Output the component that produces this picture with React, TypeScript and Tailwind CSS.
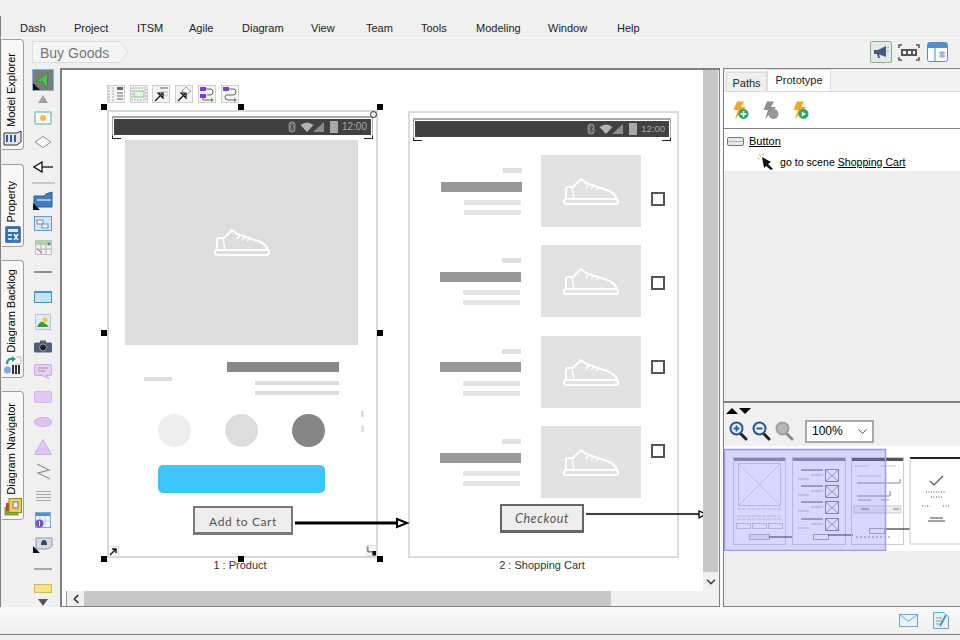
import type { ReactNode } from "react";
import { ChevronDown, ChevronLeft } from "lucide-react";

const menus = [
  { name: "Dash", w: "w-[54px]" },
  { name: "Project", w: "w-[63px]" },
  { name: "ITSM", w: "w-[52px]" },
  { name: "Agile", w: "w-[53px]" },
  { name: "Diagram", w: "w-[69px]" },
  { name: "View", w: "w-[55px]" },
  { name: "Team", w: "w-[55px]" },
  { name: "Tools", w: "w-[55px]" },
  { name: "Modeling", w: "w-[72px]" },
  { name: "Window", w: "w-[69px]" },
  { name: "Help", w: "w-[40px]" },
];

function Ico({ w, h, children }: { w: number; h: number; children: ReactNode }) {
  return (
    <svg width={w} height={h} viewBox={`0 0 ${w} ${h}`} fill="none" className="block shrink-0">
      {children}
    </svg>
  );
}

function Slot({ className, children }: { className: string; children?: ReactNode }) {
  return <div className={`flex shrink-0 items-center justify-center ${className}`}>{children}</div>;
}

function Sep() {
  return <div className="h-[2px] w-[18px] bg-[#a8a8a8]" />;
}

function Tab({ label, className, icon }: { label: string; className: string; icon: ReactNode }) {
  return (
    <div
      className={`flex w-[22px] flex-col items-center justify-end gap-[3px] rounded-r-[4px] border border-l-0 border-[#a0a0a0] bg-[#f8f8f8] pb-[3px] ${className}`}
    >
      <span className="mr-[3px] rotate-180 text-[11px] leading-none text-black [writing-mode:vertical-rl]">{label}</span>
      {icon}
    </div>
  );
}

function Palette() {
  return (
    <div className="flex w-[34px] shrink-0 flex-col items-center pt-[1px]">
      <Slot className="h-[22px] w-[22px] border border-[#7fb2e8] bg-[#7c7c7c]">
        <Ico w={20} h={20}>
          <path d="M15 3 L3 11 L10 12 L14 19 Z" fill="#4fc14f" stroke="#2f8f2f" />
          <path d="M0 13 L7 20 L0 20 Z" fill="#111" />
        </Ico>
      </Slot>
      <Slot className="h-[15px]">
        <div className="h-0 w-0 border-x-[5px] border-b-[8px] border-x-transparent border-b-[#a0a0a0]" />
      </Slot>
      <Slot className="h-[23px]">
        <div className="flex h-[14px] w-[18px] items-center justify-center rounded-[2px] border-2 border-[#9ed4d4] bg-[#fdfbf0]">
          <div className="size-[6px] rounded-full bg-[#f5b955]" />
        </div>
      </Slot>
      <Slot className="h-[26px]">
        <Ico w={18} h={12}>
          <path d="M9 0.5 L17 6 L9 11.5 L1 6 Z" fill="#fff" stroke="#8a8a8a" />
        </Ico>
      </Slot>
      <Slot className="h-[23px]">
        <Ico w={20} h={12}>
          <path d="M6 6 H20" stroke="#111" strokeWidth="1.3" />
          <path d="M9 1 L1 6 L9 11 Z" fill="#fff" stroke="#111" strokeWidth="1.3" />
        </Ico>
      </Slot>
      <Slot className="h-[10px]">
        <div className="h-[2px] w-[23px] bg-[#c8c8c8]" />
      </Slot>
      <Slot className="h-[24px]">
        <Ico w={20} h={19}>
          <path d="M1 5 L11 5 L13 3 L19 1 L19 16 L1 16 Z" fill="#3f7fc0" stroke="#2a5f9c" />
          <rect x="4" y="8" width="14" height="2" fill="#9cc4ea" />
          <path d="M0 12 L7 19 L0 19 Z" fill="#111" />
        </Ico>
      </Slot>
      <Slot className="h-[22px]">
        <Ico w={18} h={15}>
          <rect x="0.5" y="0.5" width="17" height="14" fill="#cfe4f8" stroke="#57a0e0" />
          <rect x="3" y="4" width="6" height="4" fill="#e8f0f8" stroke="#7d98b8" />
          <rect x="8" y="8" width="6" height="4" fill="#e8f0f8" stroke="#7d98b8" />
        </Ico>
      </Slot>
      <Slot className="h-[26px]">
        <Ico w={17} h={15}>
          <rect x="0.5" y="0.5" width="16" height="14" fill="#f2f2f2" stroke="#c2c2c2" />
          <rect x="1" y="1" width="15" height="4" fill="#a8d89a" />
          <path d="M0.5 9 H16.5 M6 5 V14.5 M11 5 V14.5" stroke="#b0b0b0" />
          <path d="M2 9 L7 13" stroke="#b05050" />
          <circle cx="14" cy="4" r="1.5" fill="#4f86c6" />
        </Ico>
      </Slot>
      <Slot className="h-[24px]">
        <div className="h-[2px] w-[18px] bg-[#8e8e8e]" />
      </Slot>
      <Slot className="h-[26px]">
        <div className="h-[12px] w-[18px] border border-[#3a9ac8] border-t-2 bg-[#c2e4f6]" />
      </Slot>
      <Slot className="h-[24px]">
        <Ico w={16} h={16}>
          <rect x="0.5" y="0.5" width="15" height="15" fill="#e0eaf4" stroke="#b4c8dc" />
          <circle cx="10" cy="6" r="2.5" fill="#f2c53d" />
          <path d="M2 13 Q6 5 9 9 Q12 10 14 13 Z" fill="#3f9a3a" />
        </Ico>
      </Slot>
      <Slot className="h-[24px]">
        <Ico w={18} h={13}>
          <rect x="0" y="2.5" width="18" height="10" rx="1.5" fill="#4f5f78" />
          <rect x="6" y="0.5" width="6" height="3" fill="#4f5f78" />
          <circle cx="9" cy="7.5" r="3.5" fill="#222" stroke="#9aa4b4" />
        </Ico>
      </Slot>
      <Slot className="h-[26px]">
        <Ico w={18} h={15}>
          <path d="M2 0.5 H16 Q17.5 0.5 17.5 2 V10 Q17.5 11.5 16 11.5 H12 L15 14.5 L8 11.5 H2 Q0.5 11.5 0.5 10 V2 Q0.5 0.5 2 0.5 Z" fill="#e8d0f4" stroke="#cfa4e8" />
          <path d="M4 4 H14 M4 7 H11" stroke="#a090b0" />
        </Ico>
      </Slot>
      <Slot className="h-[25px]">
        <div className="h-[12px] w-[18px] rounded-[2px] border border-[#d8b8ec] bg-[#e4c8f4]" />
      </Slot>
      <Slot className="h-[25px]">
        <div className="h-[10px] w-[18px] rounded-[50%] border border-[#d0aee8] bg-[#e0c2f2]" />
      </Slot>
      <Slot className="h-[25px]">
        <Ico w={18} h={16}>
          <path d="M9 0.5 L17.5 15.5 H0.5 Z" fill="#e2c4f2" stroke="#d0aee8" />
        </Ico>
      </Slot>
      <Slot className="h-[24px]">
        <Ico w={15} h={17}>
          <path d="M1 1 L13 7 L2 10 L14 16" stroke="#8f8f8f" strokeWidth="1.2" />
        </Ico>
      </Slot>
      <Slot className="h-[25px]">
        <div className="flex w-[15px] flex-col gap-[2px]">
          <div className="h-[1px] bg-[#a8a8a8]" />
          <div className="h-[1px] bg-[#a8a8a8]" />
          <div className="h-[1px] bg-[#a8a8a8]" />
          <div className="h-[1px] bg-[#a8a8a8]" />
        </div>
      </Slot>
      <Slot className="h-[24px]">
        <Ico w={16} h={16}>
          <rect x="0.5" y="0.5" width="15" height="15" fill="#eaf2fa" stroke="#7ea8d4" />
          <rect x="1" y="1" width="14" height="3" fill="#4f8fd0" />
          <path d="M5 4 V15 M10 4 V15 M1 9 H15" stroke="#c8d4e0" />
          <circle cx="4.5" cy="11.5" r="4" fill="#7a4fc0" />
          <rect x="4" y="9" width="1" height="5" fill="#fff" />
        </Ico>
      </Slot>
      <Slot className="h-[26px]">
        <Ico w={20} h={16}>
          <path d="M3 1 H19 V9 L15 12 H3 Z" fill="#d4dce8" stroke="#8a9ab0" />
          <path d="M8 8 Q8 3 11 3 Q14 3 14 8 Z" fill="#3a4658" />
          <path d="M0 9 L7 16 L0 16 Z" fill="#111" />
        </Ico>
      </Slot>
      <Slot className="h-[22px]">
        <Sep />
      </Slot>
      <Slot className="h-[17px]">
        <div className="h-[9px] w-[18px] border border-[#d8b850] bg-[#f6e48a]" />
      </Slot>
      <Slot className="h-[10px]">
        <div className="h-0 w-0 border-x-[5px] border-t-[7px] border-x-transparent border-t-[#555555]" />
      </Slot>
    </div>
  );
}

function Shoe({ className }: { className: string }) {
  return (
    <svg width="56" height="29" viewBox="0 0 56 29" fill="none" className={`absolute ${className}`} stroke="#fff" strokeWidth="2" strokeLinejoin="round">
      <rect x="1" y="22" width="54" height="5" rx="2" />
      <path d="M3 22 V12 Q3 10 5 10 H10 L18 2 L23 6 L44 13 Q52 16 54 22" />
      <path d="M9 10 L11 22 M26 7 L23 11 M31 9 L28 12 M36 10 L33 13" strokeWidth="1.4" />
    </svg>
  );
}

function PhoneBar({ className, compact }: { className: string; compact?: boolean }) {
  return (
    <div className={`absolute border-x border-t-2 border-[#a8a8a8] p-[1px] ${className}`}>
      <div className="flex h-full items-center justify-end gap-[4px] bg-[#414141] pr-[4px]">
        <Ico w={8} h={12}>
          <rect x="0.5" y="0.5" width="7" height="11" rx="3.5" fill="#8a8a8a" />
          <path d="M2 3.5 L6 8 L4 10 V2 L6 4 L2 8.5" stroke="#3d3d3d" strokeWidth="0.8" />
        </Ico>
        <Ico w={26} h={12}>
          <path d="M0.5 4 Q7 -1 13.5 4 L7 11 Z" fill="#b4b4b4" />
          <path d="M13 11 L24 1 V11 Z" fill="#8c8c8c" />
        </Ico>
        <div className="flex h-[12px] w-[8px] bg-[#a8a8a8]" />
        <span className={`font-['Liberation_Sans',sans-serif] leading-none text-[#a8a8a8] ${compact ? "text-[9.5px]" : "text-[10px]"}`}>12:00</span>
      </div>
      <div className="absolute -bottom-[3px] -left-[1px] h-[3px] w-[9px] border-b border-l border-[#222]" />
      <div className="absolute -right-[1px] -bottom-[3px] h-[3px] w-[9px] border-r border-b border-[#222]" />
    </div>
  );
}

function Handle({ className }: { className: string }) {
  return <div className={`absolute size-[6px] bg-black ${className}`} />;
}

function ToolIcon({ className, children }: { className: string; children: ReactNode }) {
  return (
    <div className={`absolute size-[18px] border border-[#cfcfcf] bg-[#f4f4f4] ${className}`}>
      <svg width="16" height="16" viewBox="0 0 16 16" fill="none">
        {children}
      </svg>
    </div>
  );
}

const cartRows = [
  { pic: "top-[155px]", shoe: "top-[177px]", small: "top-[168px] left-[503px]", dark: "top-[182px] left-[441px]", a: "top-[200px] left-[464px]", b: "top-[210px] left-[464px]", box: "top-[192px]" },
  { pic: "top-[245px]", shoe: "top-[267px]", small: "top-[258px] left-[502px]", dark: "top-[272px] left-[440px]", a: "top-[290px] left-[463px]", b: "top-[300px] left-[463px]", box: "top-[276px]" },
  { pic: "top-[336px]", shoe: "top-[358px]", small: "top-[349px] left-[502px]", dark: "top-[362px] left-[440px]", a: "top-[381px] left-[463px]", b: "top-[391px] left-[463px]", box: "top-[360px]" },
  { pic: "top-[426px]", shoe: "top-[448px]", small: "top-[439px] left-[502px]", dark: "top-[453px] left-[440px]", a: "top-[471px] left-[463px]", b: "top-[481px] left-[463px]", box: "top-[444px]" },
];

function Diagram() {
  return (
    <div className="absolute -top-[70px] -left-[62px] h-[640px] w-[960px] font-['Liberation_Sans',sans-serif]">
      {/* quick actions above the selected shape */}
      <ToolIcon className="top-[85px] left-[107px]">
        <path d="M1 1 V15 M5 1 V15" stroke="#aaa" strokeDasharray="2 1" />
        <rect x="9" y="1" width="6" height="3" fill="#666" />
        <path d="M9 7 H15 M9 10 H15 M9 13 H15" stroke="#666" />
      </ToolIcon>
      <ToolIcon className="top-[85px] left-[130px]">
        <rect x="1" y="2" width="14" height="12" stroke="#aaa" strokeDasharray="2 1" />
        <rect x="3" y="5" width="10" height="6" fill="#e4f4e0" stroke="#8cc87c" />
      </ToolIcon>
      <ToolIcon className="top-[85px] left-[152px]">
        <rect x="7" y="1" width="8" height="2" fill="#aaa" />
        <path d="M8 6 H15 M8 9 H15" stroke="#bbb" />
        <path d="M2 15 L9 8 M5 7 L10 7 L10 12 Z" stroke="#111" strokeWidth="1.2" fill="#fff" />
      </ToolIcon>
      <ToolIcon className="top-[85px] left-[175px]">
        <path d="M10 1 L15 5 L10 9 L6 5 Z" fill="#fff" stroke="#999" />
        <path d="M2 15 L9 8 M5 7 L10 7 L10 12 Z" stroke="#111" strokeWidth="1.2" fill="#fff" />
      </ToolIcon>
      <ToolIcon className="top-[85px] left-[198px]">
        <rect x="1" y="1" width="6" height="4" fill="#7e3fc8" />
        <rect x="1" y="8" width="6" height="4" fill="#7e3fc8" />
        <path d="M7 3 H12 Q14 3 14 6 Q14 9 11 9 H8 M4 12 V14 H12" stroke="#666" />
        <path d="M12 12 L15 14 L12 16 Z" fill="#3ba83b" />
      </ToolIcon>
      <ToolIcon className="top-[85px] left-[221px]">
        <rect x="1" y="1" width="6" height="4" fill="#7e3fc8" />
        <path d="M7 3 H12 Q14 3 14 6 Q14 9 11 9 H5 Q3 9 3 11 Q3 14 6 14 H12" stroke="#666" />
        <path d="M12 12 L15 14 L12 16 Z" fill="#3ba83b" />
      </ToolIcon>

      {/* 1 : Product */}
      <div className="absolute top-[110px] left-[107px] h-[448px] w-[271px] border-2 border-[#d8d8d8] bg-white" />
      <PhoneBar className="top-[116px] left-[112px] h-[20px] w-[261px]" />
      <div className="absolute top-[140px] left-[125px] h-[205px] w-[233px] bg-[#dddddd]" />
      <Shoe className="top-[228px] left-[214px]" />
      <div className="absolute top-[362px] left-[227px] h-[10px] w-[112px] bg-[#888888]" />
      <div className="absolute top-[377px] left-[144px] h-[4px] w-[28px] bg-[#dddddd]" />
      <div className="absolute top-[381px] left-[255px] h-[4px] w-[84px] bg-[#dddddd]" />
      <div className="absolute top-[391px] left-[255px] h-[4px] w-[84px] bg-[#dddddd]" />
      <div className="absolute top-[414px] left-[158px] size-[33px] rounded-full bg-[#eeeeee]" />
      <div className="absolute top-[414px] left-[225px] size-[33px] rounded-full bg-[#dddddd]" />
      <div className="absolute top-[414px] left-[292px] size-[33px] rounded-full bg-[#858585]" />
      <div className="absolute top-[411px] left-[361px] h-[6px] w-[3px] bg-[#dddddd]" />
      <div className="absolute top-[426px] left-[361px] h-[6px] w-[3px] bg-[#dddddd]" />
      <div className="absolute top-[465px] left-[158px] h-[28px] w-[167px] rounded-[5px] bg-[#40c4ff]" />
      <div className="absolute top-[506px] left-[193px] flex h-[29px] w-[100px] items-center justify-center border-2 border-[#7a7a7a] border-b-[3px] bg-[#eeeeee] pt-[3px] font-['Lato',sans-serif] text-[12px] tracking-[0.6px] text-[#555555]">
        Add to Cart
      </div>
      <div className="absolute top-[546px] left-[108px] flex size-[11px] items-center justify-center border border-[#dddddd] bg-[#f8f8f8]">
        <svg width="9" height="9" viewBox="0 0 9 9" fill="none">
          <path d="M1 8 L7 2 M3 2 H7 V6" stroke="#111" strokeWidth="1.4" />
        </svg>
      </div>
      <div className="absolute top-[545px] left-[366px] flex size-[11px] items-center justify-center border border-[#dddddd] bg-[#f8f8f8]">
        <svg width="10" height="10" viewBox="0 0 10 10" fill="none">
          <path d="M1 0 V6 H7" stroke="#333" />
          <rect x="6" y="5" width="4" height="5" fill="#111" />
        </svg>
      </div>
      <div className="absolute top-[111px] left-[370px] size-[7px] rounded-full border border-[#222] bg-white" />
      <div className="absolute top-[559px] left-[190px] w-[100px] text-center text-[11px] leading-[13px] text-[#333333]">1 : Product</div>
      <Handle className="top-[104px] left-[101px]" />
      <Handle className="top-[104px] left-[238px]" />
      <Handle className="top-[104px] left-[377px]" />
      <Handle className="top-[330px] left-[101px]" />
      <Handle className="top-[330px] left-[377px]" />
      <Handle className="top-[556px] left-[101px]" />
      <Handle className="top-[556px] left-[238px]" />
      <Handle className="top-[556px] left-[377px]" />

      {/* 2 : Shopping Cart */}
      <div className="absolute top-[111px] left-[408px] h-[447px] w-[271px] border-2 border-[#dcdcdc] bg-white" />
      <PhoneBar compact className="top-[118px] left-[413px] h-[20px] w-[258px]" />
      {cartRows.map((row) => (
        <div key={row.pic}>
          <div className={`absolute left-[541px] h-[72px] w-[100px] bg-[#e2e2e2] ${row.pic}`} />
          <Shoe className={`left-[563px] ${row.shoe}`} />
          <div className={`absolute h-[5px] w-[19px] bg-[#e0e0e0] ${row.small}`} />
          <div className={`absolute h-[10px] w-[81px] bg-[#999999] ${row.dark}`} />
          <div className={`absolute h-[5px] w-[57px] bg-[#e4e4e4] ${row.a}`} />
          <div className={`absolute h-[5px] w-[57px] bg-[#e4e4e4] ${row.b}`} />
          <div className={`absolute left-[651px] size-[14px] border-2 border-[#555555] bg-white ${row.box}`} />
        </div>
      ))}
      <div className="absolute top-[504px] left-[500px] flex h-[29px] w-[84px] items-center justify-center border-2 border-[#666666] border-b-[3px] bg-[#eeeeee] pt-[3px] font-['Lato',sans-serif] text-[12.5px] tracking-[0.6px] text-[#555555] italic">
        Checkout
      </div>
      <div className="absolute top-[559px] left-[482px] w-[120px] text-center text-[11px] leading-[13px] text-[#333333]">2 : Shopping Cart</div>

      {/* connectors */}
      <svg width="960" height="640" viewBox="0 0 960 640" fill="none" className="absolute top-0 left-0">
        <path d="M295 523 H398" stroke="#000" strokeWidth="3" />
        <path d="M397 519 L407 523 L397 527 Z" fill="#fff" stroke="#000" strokeWidth="2" />
        <path d="M586 514 H699" stroke="#000" strokeWidth="1.3" />
        <path d="M699 511 L706 514 L699 518 Z" fill="#fff" stroke="#000" strokeWidth="1.3" />
      </svg>
    </div>
  );
}

function CanvasFrame() {
  return (
    <div className="flex h-full w-[660px] shrink-0 flex-col border-t-2 border-r border-b border-l-2 border-[#808080] bg-[#f0f0f0]">
      <div className="flex h-[521px] shrink-0">
        <div className="relative w-[641px] shrink-0 overflow-hidden bg-white">
          <Diagram />
        </div>
        <div className="flex w-[15px] shrink-0 flex-col">
          <div className="h-[502px] shrink-0 bg-[#c8c8c8]" />
          <div className="flex flex-1 items-center justify-center">
            <ChevronDown size={14} strokeWidth={3} className="text-[#444444]" />
          </div>
        </div>
      </div>
      <div className="flex h-[15px] shrink-0">
        <div className="w-[5px] shrink-0 border-r border-[#9a9a9a] bg-white" />
        <div className="flex w-[17px] shrink-0 items-center justify-center">
          <ChevronLeft size={14} strokeWidth={3} className="text-[#333333]" />
        </div>
        <div className="w-[527px] shrink-0 bg-[#c8c8c8]" />
      </div>
    </div>
  );
}

function Bolt({ badge }: { badge?: "plus" | "play" | "gray" }) {
  const body = badge === "gray" ? "#8f8f8f" : "#f5a623";
  return (
    <Ico w={17} h={19}>
      <path d="M5 0.5 H12 L9 6 H14 L3 18 L6 9 H1.5 Z" fill={body} />
      {badge === "plus" && (
        <g>
          <circle cx="11.5" cy="13" r="5" fill="#29a86a" />
          <path d="M11.5 10 V16 M8.5 13 H14.5" stroke="#fff" strokeWidth="1.6" />
        </g>
      )}
      {badge === "play" && (
        <g>
          <circle cx="11.5" cy="13" r="5" fill="#29a86a" />
          <path d="M9.8 10.5 L14 13 L9.8 15.5 Z" fill="#fff" />
        </g>
      )}
      {badge === "gray" && <circle cx="11.5" cy="13" r="5" fill="#9a9a9a" />}
    </Ico>
  );
}

function Lens({ mark, gray }: { mark?: "plus" | "minus"; gray?: boolean }) {
  const ring = gray ? "#a0a0a0" : "#2a4f9c";
  const handle = gray ? "#8a8a8a" : "#222222";
  return (
    <Ico w={19} h={20}>
      <path d="M11 12 L17 18" stroke={handle} strokeWidth="3" strokeLinecap="round" />
      <circle cx="7.5" cy="7.5" r="6" fill={gray ? "#b8b8b8" : "#dff0ff"} stroke={ring} strokeWidth="2" />
      {mark && <path d="M4.5 7.5 H10.5" stroke={ring} strokeWidth="1.8" />}
      {mark === "plus" && <path d="M7.5 4.5 V10.5" stroke={ring} strokeWidth="1.8" />}
    </Ico>
  );
}

function Overview() {
  return (
    <svg width="237" height="105" viewBox="723 446 237 105" fill="none" className="block">
      <rect x="723" y="446" width="237" height="105" fill="#fff" />
      {/* thumbnails */}
      <rect x="732.5" y="457.5" width="52" height="87" stroke="#cfcfcf" />
      <rect x="733" y="458" width="51" height="3" fill="#8a8a8a" />
      <rect x="737.5" y="463.5" width="42" height="42" stroke="#d0d0d0" />
      <path d="M737.5 463.5 L779.5 505.5 M779.5 463.5 L737.5 505.5" stroke="#d4d4d4" />
      <path d="M736 509 H781 M736 516 H781 M736 519 H781" stroke="#d0d0d0" strokeDasharray="4 1" />
      <rect x="735.5" y="523.5" width="14" height="5" stroke="#ccc" />
      <rect x="751.5" y="523.5" width="14" height="5" stroke="#ccc" />
      <rect x="767.5" y="523.5" width="14" height="5" stroke="#ccc" />
      <rect x="748.5" y="534.5" width="20" height="5" stroke="#bbb" fill="#eee" />
      <path d="M768 537 H791" stroke="#222" />

      <rect x="791.5" y="457.5" width="53" height="87" stroke="#cfcfcf" />
      <rect x="792" y="458" width="52" height="3" fill="#8a8a8a" />
      {[469, 485, 501, 518].map((y) => (
        <g key={y}>
          <rect x="824.5" y={y + 0.5} width="13" height="12" stroke="#888" />
          <path d={`M824.5 ${y + 0.5} L837.5 ${y + 12.5} M837.5 ${y + 0.5} L824.5 ${y + 12.5}`} stroke="#999" />
          <path d={`M800 ${y + 1} H822`} stroke="#aaa" strokeWidth="2" />
          <path d={`M810 ${y + 6} H822 M797 ${y + 10} H808`} stroke="#bbb" />
        </g>
      ))}
      <rect x="812.5" y="534.5" width="15" height="5" stroke="#aaa" />
      <path d="M827 535 H852" stroke="#222" />

      <rect x="850.5" y="457.5" width="52" height="87" stroke="#ccc" />
      <rect x="851" y="458" width="51" height="3" fill="#555" />
      <path d="M853 466 H868 M880 466 H895 M856 476 H880" stroke="#ccc" />
      <path d="M856 483 H899 V479 M856 496 H889 V491" stroke="#888" />
      <path d="M857 500 H870 M880 500 H888" stroke="#999" />
      <rect x="853" y="506" width="47" height="7" fill="#eee" stroke="#ccc" />
      <path d="M860 509 H868 M892 509 H898" stroke="#777" />
      <rect x="868.5" y="528.5" width="15" height="5" stroke="#aaa" />
      <path d="M884 529 H909" stroke="#111" />
      <path d="M855 537 H890" stroke="#888" strokeDasharray="2 2" />

      <path d="M909 458 H960" stroke="#222" strokeWidth="2" />
      <path d="M909 458 V544 H960" stroke="#ccc" />
      <path d="M929 481 L933 485 L942 476" stroke="#555" strokeWidth="1.2" />
      <path d="M925 492 H945 M930 497 H941 M921 506 H929 M942 506 H949" stroke="#555" strokeDasharray="1 1.5" />
      <path d="M927 521 H944 M929 518 H942" stroke="#444" />
      {/* viewport */}
      <rect x="723.5" y="449.5" width="161" height="101" fill="#7b7bff" fillOpacity="0.3" stroke="#9a9aff" strokeWidth="1.5" />
    </svg>
  );
}

function RightPanel() {
  return (
    <div className="flex h-full min-w-0 flex-1 flex-col border-t border-b border-l border-[#808080] bg-[#eeeeee]">
      <div className="flex h-[23px] shrink-0 items-end border-b border-[#dddddd] bg-[#f2f2f2] pl-[2px] text-[11px] text-[#222222]">
        <div className="flex h-[19px] w-[41px] items-center justify-center rounded-t-[2px] border border-b-0 border-[#dddddd] bg-[#f0f0f0] pt-[2px]">Paths</div>
        <div className="flex h-[22px] w-[64px] items-center justify-center rounded-t-[2px] border border-b-0 border-[#dddddd] bg-white">Prototype</div>
      </div>
      <div className="flex h-[36px] shrink-0 items-center gap-[13px] bg-white pl-[8px]">
        <Bolt badge="plus" />
        <Bolt badge="gray" />
        <Bolt badge="play" />
      </div>
      <div className="flex h-[275px] shrink-0 flex-col border-t border-[#808080] border-b-2">
        <div className="h-[42px] shrink-0 bg-white text-[11px] leading-none text-black">
          <div className="flex h-[24px] items-center gap-[5px] pl-[3px]">
            <div className="flex h-[9px] w-[17px] items-center rounded-[2px] border border-[#777777] bg-[#e8e8e8]">
              <div className="h-[1px] w-full bg-[#b0b0b0]" />
            </div>
            <span className="underline">Button</span>
          </div>
          <div className="flex h-[18px] items-center pl-[33px] text-[10.6px]">
            <Ico w={23} h={18}>
              <path d="M2 1 L4 4 M0 5 L3 6 M6 0 L6 3" stroke="#f2c98a" strokeWidth="1.2" />
              <path d="M5 4 L14 9 L11 11 L16 16 L14 17 L9 13 L7 15 Z" fill="#111" />
            </Ico>
            <span>go to scene&nbsp;</span>
            <span className="underline">Shopping Cart</span>
          </div>
        </div>
      </div>
      <div className="flex h-[13px] shrink-0 items-center gap-[1px] bg-[#f0f0f0] pt-[3px] pl-[2px]">
        <div className="h-0 w-0 border-x-[6px] border-b-[6px] border-x-transparent border-b-black" />
        <div className="h-0 w-0 border-x-[6px] border-t-[6px] border-x-transparent border-t-black" />
      </div>
      <div className="flex h-[30px] shrink-0 items-center gap-[4px] bg-[#f0f0f0] pl-[5px]">
        <Lens mark="plus" />
        <Lens mark="minus" />
        <Lens gray />
        <div className="ml-[7px] flex h-[23px] w-[69px] items-center justify-between border-2 border-[#a8a8a8] bg-white pr-[2px] pl-[5px] text-[12px] text-black">
          100%
          <ChevronDown size={15} strokeWidth={1.5} className="text-[#444444]" />
        </div>
      </div>
      <Overview />
    </div>
  );
}

export default function App() {
  return (
    <div className="flex h-[640px] w-[960px] flex-col overflow-hidden bg-[#f0f0f0] font-['Liberation_Sans',sans-serif]">
      <div className="h-[16px] shrink-0" />
      <div className="flex h-[22px] shrink-0 items-center border-b border-l border-b-[#fafafa] border-l-[#808080] pt-[4px] pl-[19px] text-[11px] text-[#222222]">
        {menus.map((m) => (
          <div key={m.name} className={m.w}>
            {m.name}
          </div>
        ))}
      </div>

      <div className="flex h-[569px] shrink-0 border-l border-[#808080]">
        <div className="flex w-[25px] shrink-0 flex-col pt-[1px] pl-[1px]">
          <Tab
            label="Model Explorer"
            className="h-[111px]"
            icon={
              <Ico w={20} h={16}>
                <path d="M1 3 H14 L18 1 V12 L14 15 H1 Z" fill="#dfe6ef" stroke="#333" />
                <path d="M4 5 V12 M8 5 V12 M12 5 V12" stroke="#2a5f9c" strokeWidth="2" />
              </Ico>
            }
          />
          <Tab
            label="Property"
            className="mt-[14px] h-[83px]"
            icon={
              <Ico w={16} h={17}>
                <rect x="0.5" y="0.5" width="15" height="16" rx="1" fill="#2f6fc0" stroke="#5a80a8" />
                <rect x="3" y="3" width="10" height="3" fill="#dfeaf6" />
                <path d="M3 9 H7 M3 13 H7 M9 8 L13 14 M13 8 L9 14" stroke="#fff" strokeWidth="1.6" />
              </Ico>
            }
          />
          <Tab
            label="Diagram Backlog"
            className="mt-[13px] h-[118px]"
            icon={
              <Ico w={18} h={18}>
                <path d="M3 8 Q3 2 9 3" stroke="#1f9a8a" strokeWidth="2.2" />
                <path d="M8 0 L12 3 L8 6 Z" fill="#1f9a8a" />
                <circle cx="3.5" cy="14" r="3.5" fill="#7fa8d8" />
                <path d="M9 9 V18 M12 9 V18 M15 9 V18" stroke="#333" strokeWidth="2" />
                <path d="M12 1 H17 V8 H12" stroke="#bbb" />
              </Ico>
            }
          />
          <Tab
            label="Diagram Navigator"
            className="mt-[13px] h-[129px]"
            icon={
              <Ico w={18} h={18}>
                <rect x="0.5" y="9" width="14" height="8.5" fill="#7aa83c" />
                <rect x="2" y="5" width="4" height="8" fill="#c83c3c" />
                <rect x="5" y="0.5" width="12.5" height="14" fill="#f0cc50" stroke="#9a8428" />
                <rect x="9" y="4" width="5" height="6" fill="#eee" stroke="#6a7a9a" />
              </Ico>
            }
          />
        </div>

        <div className="flex min-w-0 flex-1 flex-col">
          <div className="flex h-[30px] shrink-0 items-start justify-between pt-[3px] pr-[12px] pl-[6px]">
            <div className="flex h-[22px] items-center">
              <div className="flex h-[22px] w-[88px] items-center border-y border-l border-[#dddddd] bg-[#f5f5f5] pt-[3px] pl-[7px] text-[14px] text-[#777777]">Buy Goods</div>
              <svg width="9" height="22" viewBox="0 0 9 22" fill="none" className="block">
                <path d="M0 0.5 L8 11 L0 21.5 Z" fill="#f5f5f5" />
                <path d="M0 0.5 L8 11 L0 21.5" stroke="#dddddd" />
              </svg>
            </div>
            <div className="flex items-center gap-[6px]">
              <div className="flex size-[22px] items-center justify-center rounded-[2px] border border-[#7cb87c] bg-[#e8e8e8]">
                <Ico w={16} h={14}>
                  <path d="M1 5 H5 L13 1 V12 L5 9 H1 Z" fill="#3f5f80" />
                  <path d="M4 9 L5 13 H7 L6 9" fill="#3f5f80" />
                  <path d="M14 3 L16 2 M14 6 H16" stroke="#9ab0c4" />
                </Ico>
              </div>
              <Ico w={22} h={17}>
                <path d="M1 4 V1 H4 M18 1 H21 V4 M1 13 V16 H4 M18 16 H21 V13" stroke="#555" strokeWidth="1.5" />
                <rect x="3" y="5" width="16" height="7" fill="#555" />
                <rect x="5" y="7" width="3" height="3" fill="#fff" />
                <rect x="10" y="7" width="3" height="3" fill="#fff" />
                <rect x="15" y="7" width="2" height="3" fill="#fff" />
              </Ico>
              <div className="ml-[1px]">
                <Ico w={21} h={20}>
                  <rect x="0.5" y="0.5" width="20" height="19" rx="2" fill="#fff" stroke="#4f8fd0" />
                  <rect x="1" y="1" width="19" height="5" fill="#4f8fd0" />
                  <path d="M8 6 V19" stroke="#4f8fd0" />
                  <path d="M11 11 L15 9 L19 11 L15 13 Z M11 14 L15 12 L19 14 L15 16 Z" fill="#9db4cc" />
                </Ico>
              </div>
            </div>
          </div>

          <div className="flex h-[539px] shrink-0">
            <Palette />
            <CanvasFrame />
            <div className="w-[3px] shrink-0 bg-[#fafafa]" />
            <RightPanel />
          </div>
        </div>
      </div>

      <div className="flex h-[28px] shrink-0 items-center justify-end gap-[15px] border-b border-[#808080] bg-gradient-to-b from-[#fafafa] to-[#f0f0f0] pr-[11px]">
        <Ico w={19} h={13}>
          <rect x="0.5" y="0.5" width="18" height="12" fill="#e8f2fb" stroke="#6aa8dc" />
          <path d="M1 1 L9.5 7 L18 1" stroke="#6aa8dc" />
        </Ico>
        <Ico w={16} h={17}>
          <path d="M0.5 0.5 H11 L15.5 5 V16.5 H0.5 Z" fill="#e8eef4" stroke="#6aa8dc" />
          <path d="M3 6 H9 M3 9 H9 M3 12 H9" stroke="#9a9a9a" />
          <path d="M7 14 L13 3" stroke="#2f8fd0" strokeWidth="1.6" />
        </Ico>
      </div>
    </div>
  );
}
